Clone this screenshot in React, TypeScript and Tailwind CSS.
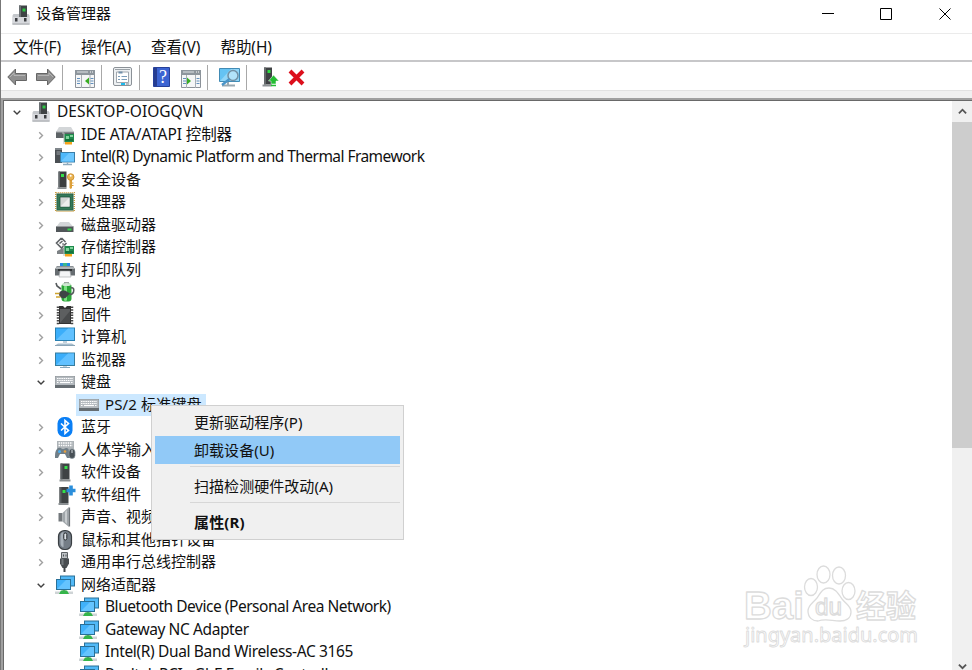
import type { ReactNode } from "react";
import clsx from "clsx";

type IconName = keyof typeof icons;

type Device = {
  label: string;
  icon: IconName;
  level: 0 | 1 | 2;
  open?: boolean;
  selected?: boolean;
  text?: string;
};

const devices: Device[] = [
  { label: "DESKTOP-OIOGQVN", icon: "computer", level: 0, open: true, text: "text-[15.5px]" },
  { label: "IDE ATA/ATAPI 控制器", icon: "ide", level: 1, text: "text-[15.5px] tracking-[-0.1px]" },
  { label: "Intel(R) Dynamic Platform and Thermal Framework", icon: "thermal", level: 1, text: "text-[15.5px] tracking-[-0.55px]" },
  { label: "安全设备", icon: "security", level: 1 },
  { label: "处理器", icon: "cpu", level: 1 },
  { label: "磁盘驱动器", icon: "disk", level: 1 },
  { label: "存储控制器", icon: "storage", level: 1 },
  { label: "打印队列", icon: "printer", level: 1 },
  { label: "电池", icon: "battery", level: 1 },
  { label: "固件", icon: "firmware", level: 1 },
  { label: "计算机", icon: "pc", level: 1 },
  { label: "监视器", icon: "monitor", level: 1 },
  { label: "键盘", icon: "keyboard", level: 1, open: true },
  { label: "PS/2 标准键盘", icon: "keyboard", level: 2, selected: true, text: "tracking-[0.15px]" },
  { label: "蓝牙", icon: "bluetooth", level: 1 },
  { label: "人体学输入设备", icon: "hid", level: 1 },
  { label: "软件设备", icon: "tower", level: 1 },
  { label: "软件组件", icon: "component", level: 1 },
  { label: "声音、视频和游戏控制器", icon: "speaker", level: 1 },
  { label: "鼠标和其他指针设备", icon: "mouse", level: 1 },
  { label: "通用串行总线控制器", icon: "usb", level: 1 },
  { label: "网络适配器", icon: "network", level: 1, open: true },
  { label: "Bluetooth Device (Personal Area Network)", icon: "network", level: 2, text: "text-[15.5px] tracking-[-0.47px]" },
  { label: "Gateway NC Adapter", icon: "network", level: 2, text: "text-[15.5px] tracking-[-0.4px]" },
  { label: "Intel(R) Dual Band Wireless-AC 3165", icon: "network", level: 2, text: "text-[15.5px] tracking-[-0.35px]" },
  { label: "Realtek PCIe GbE Family Controller", icon: "network", level: 2, text: "text-[15.5px] tracking-[-0.45px]" },
];

const menus = ["文件(F)", "操作(A)", "查看(V)", "帮助(H)"];

const card = (
  <>
    <path d="M9 9h10v8H9z" fill="#1f8a4c" />
    <path d="M7 8h2v11" fill="none" stroke="#b9bdbb" />
    <path d="M11 11h3v3h-3zM15 10h3v2h-3z" fill="#7fd39b" />
    <path d="M10 15h8" stroke="#0d5c2e" />
    <path d="M10 17h7v2.500h-7z" fill="#f5a31a" />
  </>
);

const tower = (
  <>
    <path d="M5.500 1.500h9v16h-9z" fill="#3f4345" />
    <path d="M5.500 1.500h2v16h-2z" fill="#5b6063" />
    <path d="M4.500 17.500h11v2h-11z" fill="#8b9093" />
    <path d="M9.500 4h3v3h-3z" fill="#35e04a" />
  </>
);

const keys = (
  <>
    <path d="M0 4h20v12H0z" fill="#8d9398" />
    <path d="M0.500 4.500h19v8.500h-19z" fill="#b4babf" />
    <path d="M2 6.500h16M2 8.500h16M2 10.500h2M16 10.500h2" stroke="#fff" strokeWidth="1.200" strokeDasharray="1.500 0.700" />
    <path d="M5 10.500h10" stroke="#fff" strokeWidth="1.200" />
    <path d="M0 13h20v3H0z" fill="#666d72" />
  </>
);

const icons = {
  computer: (
    <>
      <path d="M8 0.500h8v11.500H8z" fill="#3f4345" />
      <path d="M8 0.500h2v11.500H8z" fill="#6b7073" />
      <path d="M11.500 3.500h3v3h-3z" fill="#2fc644" />
      <path d="M1.500 10.500l1-1.500H8v3h8V9h1.500l1 1.500v9h-17z" fill="#c4c7cb" />
      <path d="M1.500 12h17v7.500h-17z" fill="#d6d8dc" />
      <path d="M1.500 19h17" stroke="#a4a7ab" />
      <path d="M4 13h2.500v3.500H4zM13 13h2.500v3.500H13z" fill="#3b3d40" />
    </>
  ),
  ide: (
    <>
      <path d="M4 2h12l3 5H1z" fill="#d3d6d8" />
      <path d="M1 7h18v6H1z" fill="#5d6366" />
      <path d="M1 7h18" stroke="#a9adb0" />
      {card}
    </>
  ),
  thermal: (
    <>
      <path d="M0 1h7v15H0z" fill="#4a4f53" />
      <path d="M0 1h7v2H0z" fill="#80868b" />
      <path d="M1.500 5h4M1.500 7h4" stroke="#9da3a8" />
      <path d="M5 5h15v10.500H5z" fill="#3a7ea8" />
      <path d="M6 6h13v8.500H6z" fill="#4db8fb" />
      <path d="M6 14.500L14 6h5v8.500z" fill="#6cc7ff" />
      <path d="M8 17.500h9M12.500 15.500v2" stroke="#8eaabd" strokeWidth="1.400" />
    </>
  ),
  security: (
    <>
      <path d="M3.500 1.500h8v16h-8z" fill="#3b3e40" />
      <path d="M3.500 1.500h1.500v16H3.500z" fill="#63686b" />
      <path d="M2.500 17.500h9v1.500h-9z" fill="#888d90" />
      <path d="M6 4h3v3H6z" fill="#35e04a" />
      <path d="M14.500 9h2.500v9l-1.300 1-1.200-1z" fill="#dda03a" />
      <circle cx="15.700" cy="7" r="3.300" fill="#e9b455" stroke="#cc8b25" strokeWidth="0.800" />
      <circle cx="15.700" cy="5.800" r="1" fill="#fff" />
      <path d="M16.500 13h2M16.500 15.500h2" stroke="#dda03a" />
    </>
  ),
  cpu: (
    <>
      <path d="M0.700 0.700h18.600v18.600H0.700z" fill="none" stroke="#c99b3e" strokeWidth="1.400" strokeDasharray="1 1" />
      <path d="M1.500 1.500h17v17h-17z" fill="#28634a" />
      <path d="M2.500 2.500h15v15h-15z" fill="#357958" />
      <path d="M5 5h10v10H5z" fill="#d3d5d4" stroke="#174c35" strokeWidth="0.700" />
      <path d="M5.500 14.500l9-9v9z" fill="#ededed" />
    </>
  ),
  disk: (
    <>
      <path d="M5 7h9l4 4.500H1.500z" fill="#d3d6d8" />
      <path d="M1 11.500h17.500V17H1z" fill="#515659" />
      <path d="M1 11.500h17.500" stroke="#96999c" />
      <path d="M12.500 13.500h4v2h-4z" fill="#32d64a" />
    </>
  ),
  storage: (
    <>
      <path d="M6.500 1L1.500 6l5 5 5-5M6.500 1l4 4M4.500 6.500l3-2.500M7.500 6.500L10 9" fill="none" stroke="#5f6366" strokeWidth="1.600" />
      <path d="M2 14l6-3h9l2 3v3H2z" fill="#7d8285" />
      {card}
    </>
  ),
  printer: (
    <>
      <path d="M5 3h10v4H5z" fill="#218bea" />
      <path d="M8 3h4v4H8z" fill="#3cb88a" />
      <path d="M2 6h16l2 3v6.500H0V9z" fill="#666c70" />
      <path d="M1.500 6.500h17l1 2.500h-19z" fill="#afb4b7" />
      <path d="M3 9h14v2H3z" fill="#303436" />
      <path d="M5 11h10l1 6H4z" fill="#f4f5f6" stroke="#9da1a4" strokeWidth="0.600" />
    </>
  ),
  battery: (
    <>
      <path d="M9 0h5v2H9z" fill="#9ca5a0" />
      <rect x="6.500" y="1.500" width="10" height="18" rx="3" fill="#2aa437" />
      <rect x="9" y="3" width="3" height="16" rx="1.500" fill="#7be082" />
      <ellipse cx="11.500" cy="2.500" rx="4.500" ry="1.500" fill="#d0e6d2" />
      <path d="M1 1l1 3 4 3M16 6c3-1 3 2 2.500 4s-2 2.500-4 2.500" fill="none" stroke="#555a5c" strokeWidth="1.600" />
      <path d="M4 12c0-3 4-4 6-3.500l5 3-4.500 4.500C7 17 4 15 4 12z" fill="#3f4446" />
      <path d="M0 11.500h4.500M1 15h4.500" stroke="#cfa42f" strokeWidth="1.400" />
    </>
  ),
  firmware: (
    <>
      <path d="M3 1.500v18M17 1.500v18" stroke="#444" strokeWidth="2.500" strokeDasharray="1.500 1.200" />
      <path d="M4 1h4l2 2 2-2h4v18H4z" fill="#333" />
      <path d="M5 4h10v14H5z" fill="#5d5f60" />
      <path d="M5 18L15 6v12z" fill="#494b4c" />
    </>
  ),
  pc: (
    <>
      <path d="M0 0.500h20v13.500H0z" fill="#287fb0" />
      <path d="M1 1.500h18v11.500H1z" fill="#3baefa" />
      <path d="M1 13L13 1.500h6V13z" fill="#61c1ff" />
      <path d="M8 14h4v2H8z" fill="#c3d1db" />
      <path d="M3 16.500h14l3 2H0z" fill="#a7bdcd" />
      <path d="M0 18.500h20" stroke="#8ba5b7" />
    </>
  ),
  monitor: (
    <>
      <path d="M0 2.500h20v13.500H0z" fill="#367d9f" />
      <path d="M1 3.500h18v11.500H1z" fill="#3baefa" />
      <path d="M1 15L13 3.500h6v11.500z" fill="#61c1ff" />
      <path d="M8 16h4v1.500H8z" fill="#c3d1db" />
      <path d="M5 17.500h10" stroke="#86a8bc" />
    </>
  ),
  keyboard: keys,
  bluetooth: (
    <>
      <rect x="2.500" y="0" width="15" height="20" rx="6.500" fill="#0a7ff5" />
      <path d="M6 6.500l7.500 7-3.500 3v-13l3.500 3-7.500 7" fill="none" stroke="#fff" strokeWidth="1.600" />
    </>
  ),
  hid: (
    <>
      <path d="M2 1h17v9H2z" fill="#aeb4b8" />
      <path d="M3.500 3h14M3.500 5.500h14" stroke="#fff" strokeWidth="1.300" strokeDasharray="1.500 0.800" />
      <path d="M2 9c2-2 4-1 5 0h2c2-2 5-1 5 2l1 7h-3l-2-4H5l-2 4H0c0-4 0-7 2-9z" fill="#707e87" />
      <circle cx="4.500" cy="11.500" r="1.500" fill="#4baff0" />
      <circle cx="10" cy="11.500" r="1.300" fill="#e6a040" />
      <rect x="14" y="9" width="6" height="9.500" rx="3" fill="#485056" stroke="#8a969e" strokeWidth="0.700" />
      <path d="M17 10v3" stroke="#d5dbe0" />
    </>
  ),
  tower,
  component: (
    <>
      <path d="M4.500 2h9v16h-9z" fill="#3f4345" />
      <path d="M4.500 2h2v16h-2z" fill="#5b6063" />
      <path d="M3.500 18h10v2h-10z" fill="#8b9093" />
      <path d="M7.500 5h3v3h-3z" fill="#35e04a" />
      <path d="M16 0.500v10M11.500 5.500h9" stroke="#2a8edb" strokeWidth="3.600" />
    </>
  ),
  speaker: (
    <>
      <path d="M3.500 6h4v8.500h-4z" fill="#73787c" />
      <path d="M7.500 6L14 0v20l-6.500-5.500z" fill="#a0a6aa" />
      <path d="M10 5v10l2 2V3z" fill="#c9cdd0" />
      <path d="M14.500 0.500v19" stroke="#6e7478" strokeWidth="1.200" />
    </>
  ),
  mouse: (
    <>
      <rect x="3.500" y="0.500" width="13" height="19" rx="6" fill="#747d86" stroke="#393e42" strokeWidth="1.200" />
      <path d="M5.500 6c0-3 2-4 3-4v15c-2 0-3-2-3-4z" fill="#a9b2ba" />
      <rect x="8.800" y="3" width="3" height="7" rx="1.500" fill="#dce2e7" stroke="#25292c" />
    </>
  ),
  usb: (
    <>
      <path d="M6.500 0.500h6v6h-6z" fill="#bfc3c6" stroke="#5c6164" />
      <path d="M8 2.500h1v2H8zM10.500 2.500h1v2h-1z" fill="#4b5053" />
      <path d="M5 6.500h9v5l-2.500 4.500h-4L5 11.500z" fill="#494e51" />
      <path d="M6.500 7h2v6h-2z" fill="#747a7e" />
      <path d="M9.500 15v5" stroke="#3f4447" strokeWidth="2" />
    </>
  ),
  network: (
    <>
      <path d="M5 0.500h15v11H5z" fill="#2a7097" />
      <path d="M6 1.500h13v9H6z" fill="#51b9f7" />
      <path d="M1 4h15v11H1z" fill="#2a7097" />
      <path d="M2 5h13v9H2z" fill="#40b1fa" />
      <path d="M2 14l9-9h4v9z" fill="#65c4ff" />
      <path d="M7.500 15h3v2h-3z" fill="#6b9a77" />
      <path d="M0 16.500h18v2.500H0z" fill="#cfd4d6" />
      <path d="M6 15.500h6l2 3.500H4z" fill="#35b54a" />
    </>
  ),
} satisfies Record<string, ReactNode>;

function Icon({ name, className }: { name: IconName; className?: string }) {
  return (
    <svg viewBox="0 0 20 20" className={clsx("size-5 shrink-0 overflow-visible", className)}>
      {icons[name]}
    </svg>
  );
}

function TitleBar() {
  return (
    <header className="flex h-[34px] shrink-0 items-start justify-between border-b border-[#ebebeb]">
      <div className="flex items-center gap-[5px] pt-[3px] pl-[10px]">
        <Icon name="computer" />
        <span className="pb-0.5 leading-[21px]">设备管理器</span>
      </div>
      <svg viewBox="0 0 130 13" className="mt-2 mr-[20px] h-[13px] w-[130px]" fill="none" stroke="#000">
        <path d="M0 5.500h12M58.500 0.500h11v11h-11zM117.500 0.500l11 11M128.500 0.500l-11 11" />
      </svg>
    </header>
  );
}

function MenuBar() {
  return (
    <nav className="flex h-[26px] shrink-0 items-center gap-5 pl-3 text-[15.5px]">
      {menus.map((menu) => (
        <span key={menu} className="pb-px tracking-[-0.05px]">
          {menu}
        </span>
      ))}
    </nav>
  );
}

function Divider({ className }: { className?: string }) {
  return <span className={clsx("h-[25px] w-px bg-[#a8a8a8]", className)} />;
}

function PaneIcon({ forward }: { forward?: boolean }) {
  return (
    <svg viewBox="0 0 20 18" className="h-[18px] w-5">
      <path d="M0.500 0.500h19v17H0.500z" fill="#f5f6f7" stroke="#8c9299" />
      <path d="M0 0h20v5H0z" fill="#8d959c" />
      <path d="M2 2h11" stroke="#dfe3e6" />
      <path d="M15 2h3" stroke="#fff" strokeDasharray="1 1" />
      <path d={forward ? "M14.500 5v13M5.500 5v13" : "M6.500 5v13M15 5v13"} stroke="#a8aeb4" />
      <path d="M2 8.500h3M2 11h3M2 13.500h3M15.500 8.500h3M15.500 11h3M15.500 13.500h3" stroke="#6290bd" />
      <path d={forward ? "M6 7.500v7l4-3.500z" : "M14 7.500v7L10 11z"} fill="#39ad22" />
    </svg>
  );
}

function Toolbar() {
  return (
    <div className="flex h-[31px] shrink-0 items-center border-t-2 border-b border-t-[#c7c7c9] border-b-[#e2e2e2] pt-[2px] pl-[6px]">
      <svg viewBox="0 0 20 18" className="h-[18px] w-5" fill="#8f8f8f" stroke="#666">
        <path d="M0.800 9L8.500 1v4.500h11v7h-11V17z" />
        <path d="M3 9l4-4v2.500h11" fill="none" stroke="#b4b4b4" />
      </svg>
      <svg viewBox="0 0 20 18" className="ml-[9px] h-[18px] w-5" fill="#8f8f8f" stroke="#666">
        <path d="M19.200 9L11.500 1v4.500h-11v7h11V17z" />
        <path d="M17 9l-4-4v2.500H2" fill="none" stroke="#b4b4b4" />
      </svg>
      <Divider className="ml-[6px]" />
      <span className="ml-3 pt-[3px]">
        <PaneIcon />
      </span>
      <Divider className="ml-[6px]" />
      <svg viewBox="0 0 19 20" className="ml-[11px] h-5 w-[19px]">
        <rect x="0.500" y="0.500" width="18" height="18" rx="1.500" fill="#edf0f2" stroke="#8b9197" />
        <path d="M2 2.500h15" stroke="#9aa1a7" />
        <path d="M3.500 5h12v10.500h-12z" fill="#fff" stroke="#a0a7ae" />
        <path d="M5.500 5.500h4" stroke="#718fa9" strokeWidth="2" />
        <path d="M5 9.500h2M8.500 9.500h5.500M5 12.500h2M8.500 12.500h5.500" stroke="#7a9cb9" />
        <path d="M8 17h4" stroke="#1db9ec" strokeWidth="2" />
        <path d="M13 17h3" stroke="#7c8b94" />
      </svg>
      <Divider className="ml-[7px]" />
      <svg viewBox="0 0 17 20" className="ml-[13px] h-5 w-[17px]">
        <path d="M0.500 0.500h16v19H0.500z" fill="#3c64d2" stroke="#26409a" />
        <path d="M1 1h3v18H1z" fill="#263d91" />
        <text x="10" y="16" textAnchor="middle" fill="#fff" fontSize="18" fontFamily="Liberation Serif">
          ?
        </text>
      </svg>
      <span className="ml-[11px] pt-[3px]">
        <PaneIcon forward />
      </span>
      <Divider className="ml-[6px]" />
      <svg viewBox="0 0 21 19" className="ml-[11px] h-[19px] w-[21px]">
        <path d="M0.500 0.500h20v13h-20z" fill="#65c3f3" stroke="#418bb5" />
        <path d="M1 13L12 1h8v12z" fill="#91d6f8" />
        <path d="M3 17.500h13M9 14v3" stroke="#9aa9b2" strokeWidth="2" />
        <circle cx="14" cy="7.500" r="5" fill="#b9e6fa" fillOpacity="0.800" stroke="#7291a5" strokeWidth="1.500" />
        <path d="M10.500 11L3 17" stroke="#4a95c8" strokeWidth="2.500" />
      </svg>
      <Divider className="ml-[6px]" />
      <svg viewBox="0 0 17 20" className="ml-[15px] h-5 w-[17px]">
        <path d="M2 0.500h8v17H2z" fill="#3e4143" />
        <path d="M2 0.500h2v17H2z" fill="#666b6d" />
        <path d="M0.500 17.500h9v2h-9z" fill="#8c9194" />
        <path d="M5.500 3h3v3h-3z" fill="#30dc43" />
        <path d="M11.500 8l5.500 6h-3v3H9v-3H6.500z" fill="#24be34" stroke="#fff" strokeWidth="0.500" />
        <path d="M9 18.500h5" stroke="#24be34" strokeWidth="1.500" />
      </svg>
      <svg viewBox="0 0 17 17" className="ml-[9px] size-[17px]" stroke="#dc0f1c" strokeWidth="4">
        <path d="M2 2c4 4 9 9 13 13M15 2C11 6 6 11 2 15" />
      </svg>
    </div>
  );
}

function Chevron({ open }: { open?: boolean }) {
  return (
    <svg viewBox="0 0 10 10" className="size-[10px] shrink-0" fill="none">
      {open ? (
        <path d="M1.700 3.700L5 7l3.300-3.300" stroke="#404040" strokeWidth="1.400" />
      ) : (
        <path d="M3.200 2.200L6.500 5.500 3.200 8.800" stroke="#a0a0a0" strokeWidth="1.400" />
      )}
    </svg>
  );
}

function DeviceRow({ device }: { device: Device }) {
  const { level, selected } = device;
  return (
    <li
      className={clsx(
        "flex h-[22.5px] items-center",
        level === 0 && "pl-[8px]",
        level === 1 && "pl-[32px]",
        level === 2 && "pl-[72px]",
      )}
    >
      {level < 2 && <Chevron open={device.open} />}
      <div className={clsx("flex h-full items-center pr-1 whitespace-nowrap", selected && "bg-[#cce8ff]")}>
        <Icon name={device.icon} className={clsx("mr-[6px]", level === 2 ? "ml-[3px]" : "ml-[9px]", level === 0 && "-ml-px")} />
        <span className={clsx("pb-[2px]", device.text)}>{device.label}</span>
      </div>
    </li>
  );
}

function ScrollBar() {
  return (
    <div className="flex w-5 shrink-0 flex-col items-center justify-between bg-[#f0f0f0]">
      <div className="flex w-full flex-col items-center">
        <svg viewBox="0 0 10 10" className="my-[6px] size-[9px]" fill="none" stroke="#555" strokeWidth="2">
          <path d="M1 7l4-4 4 4" />
        </svg>
        <div className="h-[326px] w-full bg-[#cdcdcd]" />
      </div>
      <svg viewBox="0 0 10 10" className="size-[9px]" fill="none" stroke="#555" strokeWidth="2">
        <path d="M1 4l4 4 4-4" />
      </svg>
    </div>
  );
}

function ContextMenu() {
  return (
    <div className="absolute top-[405px] left-[151px] flex h-[135px] w-[253px] flex-col border border-[#d0d0d0] bg-[#f0f0f0] px-[3px] pt-[3px] tracking-[0.05px]">
      <div className="flex h-[27px] items-center pb-0.5 pl-[39px]">更新驱动程序(P)</div>
      <div className="flex h-7 items-center bg-[#91c9f7] pb-px pl-[39px]">卸载设备(U)</div>
      <div className="mt-[2px] ml-[35px] h-px bg-[#d7d7d7]" />
      <div className="mt-[6px] flex h-7 items-center pb-0.5 pl-[39px]">扫描检测硬件改动(A)</div>
      <div className="mt-px ml-[35px] h-px bg-[#d7d7d7]" />
      <div className="mt-[6px] flex h-7 items-center pb-0.5 pl-[39px] font-bold tracking-[0.15px]">属性(R)</div>
    </div>
  );
}

function Watermark() {
  return (
    <svg
      viewBox="0 0 180 90"
      className="absolute top-[562px] left-[742px] h-[90px] w-[180px]"
      fill="#fff"
      stroke="#dcdcdc"
      strokeWidth="1.300"
      strokeLinejoin="round"
    >
      <text x="2" y="57" fontSize="39" fontWeight="bold" fontFamily="Liberation Sans" textLength="60" lengthAdjust="spacingAndGlyphs">
        Bai
      </text>
      <ellipse cx="69" cy="25" rx="6.500" ry="8.500" />
      <ellipse cx="81.500" cy="12.500" rx="6.500" ry="8.500" />
      <ellipse cx="97" cy="13.500" rx="6.500" ry="8.500" />
      <ellipse cx="106.500" cy="29" rx="6.500" ry="8.500" />
      <path d="M87 26c6 0 9 5 13 11 5 6 9 7 9 13 0 7-6 9-11 9-8 0-14-3-22 0-5 0-10-3-10-10 0-6 5-8 9-13 4-6 6-10 12-10z" />
      <text x="73" y="53" fontSize="24" fontFamily="Liberation Sans" textLength="27" lengthAdjust="spacingAndGlyphs">
        du
      </text>
      <text x="114" y="55" fontSize="31" fontFamily="Noto Sans CJK SC" fontWeight="bold" textLength="60" lengthAdjust="spacingAndGlyphs">
        经验
      </text>
      <text x="3" y="80" fontSize="20" fontFamily="Noto Sans" strokeWidth="0.900" textLength="173" lengthAdjust="spacingAndGlyphs">
        jingyan.baidu.com
      </text>
    </svg>
  );
}

export default function App() {
  return (
    <div className="relative flex h-[670px] w-[972px] flex-col overflow-hidden bg-white font-['Noto_Sans','Noto_Sans_CJK_SC',sans-serif] text-[15px] leading-[22px] text-[#111]">
      <div className="flex h-full flex-col border-l border-[#777]">
        <TitleBar />
        <MenuBar />
        <Toolbar />
        <div className="h-[7px] shrink-0 bg-[#f0f0f0]" />
        <div className="flex min-h-0 flex-1 border-t-2 border-l-2 border-[#a0a0a0]">
          <div className="flex min-w-0 flex-1 border-t border-l border-[#696969]">
            <ul className="min-w-0 flex-1">
              {devices.map((device) => (
                <DeviceRow key={device.label} device={device} />
              ))}
            </ul>
            <ScrollBar />
          </div>
        </div>
      </div>
      <Watermark />
      <ContextMenu />
    </div>
  );
}
